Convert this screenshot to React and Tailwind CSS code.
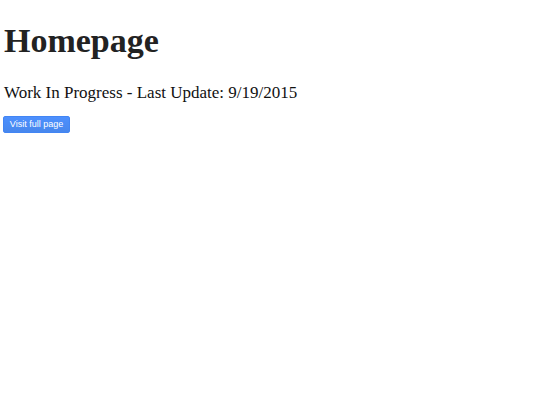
export default function App() {
  return (
    <div className="min-h-[405px] bg-white px-1 pt-[18px] font-['Liberation_Serif',serif] text-[#222]">
      <h1 className="text-[34px] font-bold leading-[46px]">Homepage</h1>
      <p className="mt-[19px] text-[17px] leading-[20px] text-[#111]">
        Work In Progress - Last Update: 9/19/2015
      </p>
      <button className="mt-[13px] ml-[-1px] block h-[17px] w-[67px] rounded-[2px] border border-[#4285f4] bg-gradient-to-b from-[#4d90fe] to-[#4787ed] font-['Liberation_Sans',sans-serif] text-[9px] leading-[15px] text-white">
        Visit full page
      </button>
    </div>
  );
}
